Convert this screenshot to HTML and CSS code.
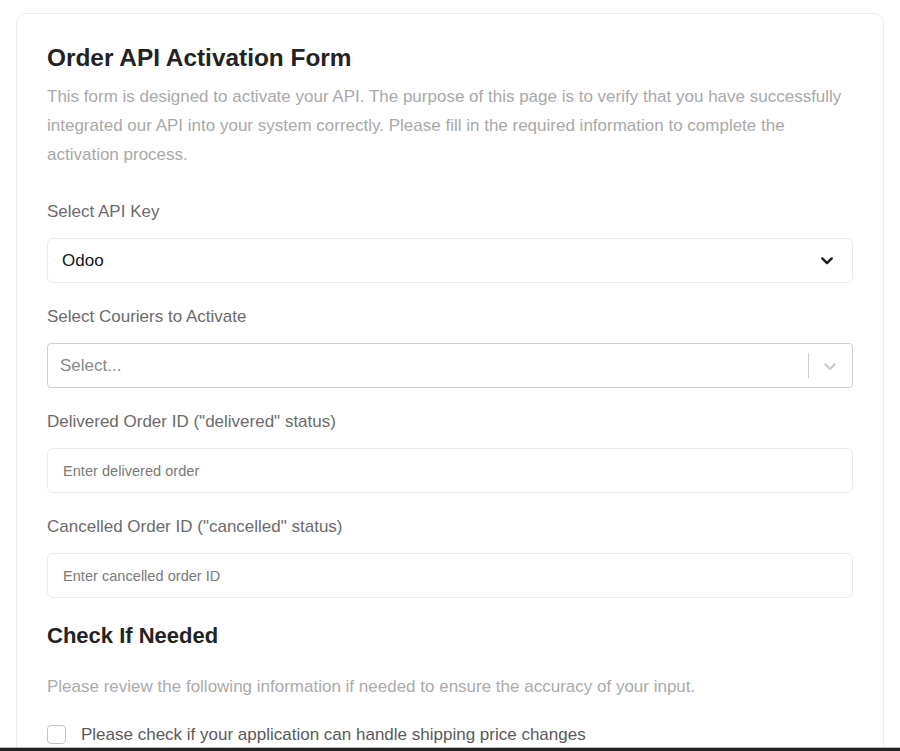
FILE: index.html
```html
<!DOCTYPE html>
<html lang="en">
<head>
<meta charset="utf-8">
<title>Order API Activation Form</title>
<link rel="stylesheet" href="styles.css">
</head>
<body>
<div class="viewport">
  <div class="card">
    <h1 class="title">Order API Activation Form</h1>
    <p class="intro">This form is designed to activate your API. The purpose of this page is to verify that you have successfully integrated our API into your system correctly. Please fill in the required information to complete the activation process.</p>

    <div class="group">
      <label class="label">Select API Key</label>
      <div class="field select-native">
        <span class="value">Odoo</span>
        <svg class="chev-dark" width="12" height="8" viewBox="0 0 12 8"><path d="M1.3 1.4 L6 6.1 L10.7 1.4" fill="none" stroke="#1f1f1f" stroke-width="2.4" stroke-linecap="round" stroke-linejoin="round"/></svg>
      </div>
    </div>

    <div class="group">
      <label class="label">Select Couriers to Activate</label>
      <div class="field select-react">
        <span class="placeholder">Select...</span>
        <span class="sep"></span>
        <span class="indicator">
          <svg width="20" height="20" viewBox="0 0 20 20"><path d="M4.516 7.548c0.436-0.446 1.043-0.481 1.576 0l3.908 3.747 3.908-3.747c0.533-0.481 1.141-0.446 1.574 0 0.436 0.445 0.408 1.197 0 1.615-0.406 0.418-4.695 4.502-4.695 4.502-0.217 0.223-0.502 0.335-0.787 0.335s-0.57-0.112-0.789-0.335c0 0-4.287-4.084-4.695-4.502s-0.436-1.170 0-1.615z" fill="#cccccc"/></svg>
        </span>
      </div>
    </div>

    <div class="group">
      <label class="label">Delivered Order ID ("delivered" status)</label>
      <div class="field input"><span class="ph-small">Enter delivered order</span></div>
    </div>

    <div class="group">
      <label class="label">Cancelled Order ID ("cancelled" status)</label>
      <div class="field input"><span class="ph-small">Enter cancelled order ID</span></div>
    </div>

    <h2 class="subtitle">Check If Needed</h2>
    <p class="note">Please review the following information if needed to ensure the accuracy of your input.</p>

    <div class="check-row">
      <span class="box"></span>
      <span class="check-text">Please check if your application can handle shipping price changes</span>
    </div>
  </div>
</div>
<div class="bottom-bar"></div>
</body>
</html>
```

FILE: styles.css
```css
* { box-sizing: border-box; }

html, body {
  margin: 0;
  padding: 0;
  background: #ffffff;
  font-family: "Liberation Sans", Arial, Helvetica, sans-serif;
}

.viewport {
  height: 747px;
  overflow: hidden;
  padding: 13px 16px 0 16px;
}

.card {
  width: 868px;
  border: 1px solid #ececec;
  border-radius: 10px;
  padding: 30px 30px 40px 30px;
  min-height: 800px;
}

.title {
  margin: 0;
  font-size: 24.4px;
  font-weight: 700;
  color: #232323;
  line-height: 28px;
}

.intro {
  margin: 10px 0 33px 0;
  font-size: 17px;
  line-height: 29px;
  color: #a9a9a9;
}

.group {
  margin-bottom: 24px;
}

.label {
  display: block;
  font-size: 17px;
  line-height: 19px;
  color: #6b6b6b;
  margin-bottom: 17px;
}

.field {
  height: 45px;
  display: flex;
  align-items: center;
  background: #fff;
}

.select-native {
  border: 1px solid #e9e9e9;
  border-radius: 6px;
  padding: 0 19px 0 14px;
  justify-content: space-between;
}

.value {
  font-size: 17px;
  color: #151515;
}

.select-react {
  border: 1px solid #cfcfcf;
  border-radius: 4px;
  padding: 0 0 0 12px;
}

.placeholder {
  flex: 1;
  font-size: 17px;
  color: #8a8a8a;
}

.sep {
  width: 1px;
  align-self: stretch;
  margin: 9px 0;
  background: #cfcfcf;
}

.indicator {
  display: flex;
  padding: 0 12px 0 11px;
}

.input {
  border: 1px solid #ebebeb;
  border-radius: 6px;
  padding: 0 15px;
}

.ph-small {
  font-size: 14.6px;
  color: #7a7a7a;
}

.subtitle {
  margin: 26px 0 0 0;
  font-size: 22px;
  line-height: 23px;
  font-weight: 700;
  color: #232323;
}

.note {
  margin: 30px 0 0 0;
  font-size: 17px;
  line-height: 19px;
  color: #ababab;
}

.check-row {
  margin-top: 29px;
  display: flex;
  align-items: center;
  gap: 15px;
}

.box {
  width: 19px;
  height: 19px;
  border: 1px solid #c4c4c4;
  border-radius: 4px;
  flex: none;
}

.check-text {
  font-size: 17px;
  line-height: 19px;
  color: #5a5a5a;
}

.bottom-bar {
  height: 4px;
  background: #232323;
  border-top: 1px solid #b8b8b8;
}
```
